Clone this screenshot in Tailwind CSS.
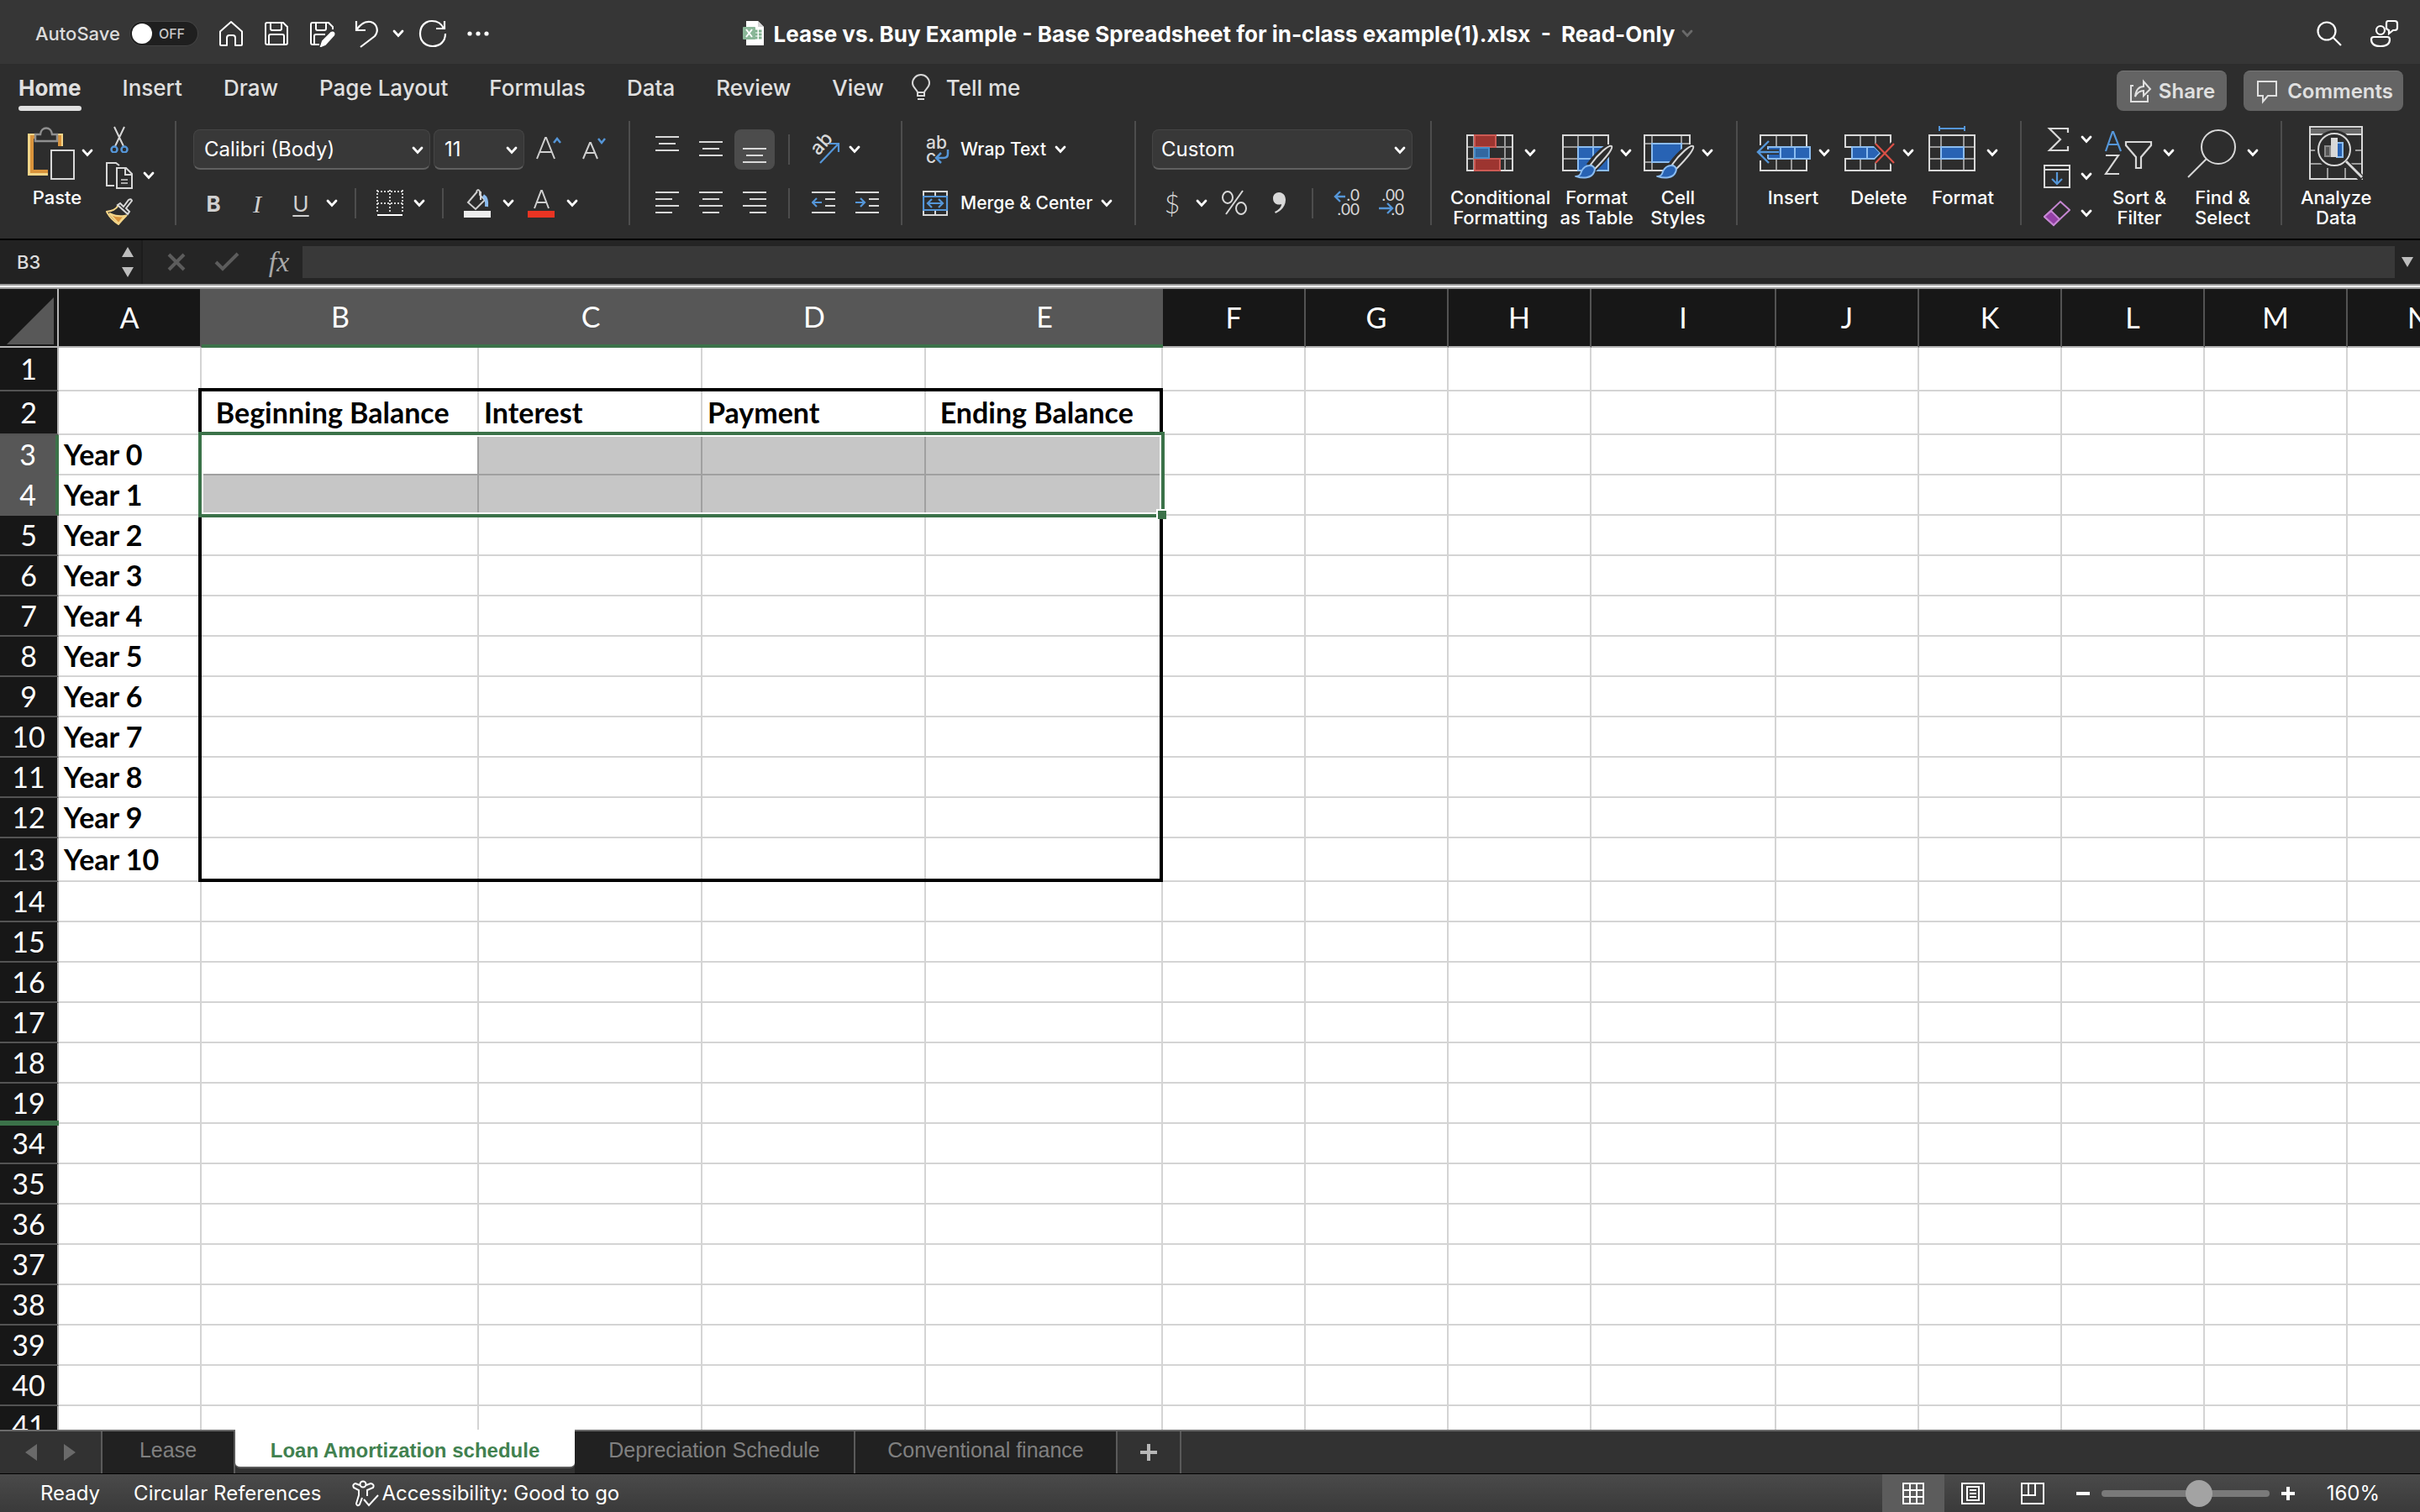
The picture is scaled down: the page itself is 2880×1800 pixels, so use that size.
<!DOCTYPE html>
<html lang="en">
<head>
<meta charset="utf-8">
<meta name="viewport" content="width=device-width, initial-scale=1">
<title>Lease vs. Buy Example</title>
<script src="https://cdn.jsdelivr.net/npm/@tailwindcss/browser@4"></script>
</head>
<body class="flex h-screen flex-col overflow-hidden bg-[#2d2d2d] font-[Inter,sans-serif] text-white">

<svg class="hidden" aria-hidden="true">
  <symbol id="chev" viewBox="0 0 14 10"><path d="M2 2l5 5.5L12 2" fill="none" stroke="currentColor" stroke-width="2.8" stroke-linecap="round"/></symbol>
  <symbol id="brush" viewBox="0 0 46 42">
    <path d="M44 2C46 5 36 17 24 29l-6-6C28 10 40 0 44 2z" fill="#2d2d2d" stroke="#2d2d2d" stroke-width="6"/>
    <path d="M44 2C46 5 36 17 24 29l-5-5C28 11 41 0 44 2z" fill="#2d2d2d" stroke="#d8d8d8" stroke-width="2"/>
    <path d="M18 25c5 0 7 4 5 8-3 7-13 8-21 5 5-1 5-3 6-6 2-4 5-7 10-7z" fill="#2863b4" stroke="#8bbcf0" stroke-width="2"/>
  </symbol>
</svg>

<!-- Title bar -->
<header class="flex h-[76px] shrink-0 items-center bg-[#363636] px-6 pt-1">
  <div class="flex flex-1 items-center pl-[18px]">
    <label for="autosave" class="text-[22px] font-medium text-[#dcdcdc]">AutoSave</label>
    <button id="autosave" role="switch" aria-checked="false" class="ml-3 flex h-7 w-20 items-center rounded-full bg-[#1f1f1f] px-0.5 ring-1 ring-[#444]">
      <span class="h-6 w-6 rounded-full bg-white"></span><span class="ml-2 text-[16px] font-medium text-[#c8c8c8]">OFF</span>
    </button>
    <button aria-label="Home" class="ml-6"><svg class="h-8 w-8" fill="none" stroke="#fff" stroke-width="2" stroke-linejoin="round"><path d="M3 13.500L16 2l13 11.500V29q0 1-1 1h-7v-9q0-3-3-3h-4q-3 0-3 3v9H4q-1 0-1-1z"/></svg></button>
    <button aria-label="Save" class="ml-[22px]"><svg class="h-8 w-8" fill="none" stroke="#fff" stroke-width="2"><path d="M5 3h19l5 5v19a2 2 0 0 1-2 2H5a2 2 0 0 1-2-2V5a2 2 0 0 1 2-2zM9 3v7q0 2 2 2h9q2 0 2-2V3M7 29V19q0-2 2-2h14q2 0 2 2v10"/></svg></button>
    <button aria-label="Save a copy" class="ml-[22px]"><svg class="h-8 w-8" fill="none" stroke="#fff" stroke-width="2"><path d="M13 29H5a2 2 0 0 1-2-2V5a2 2 0 0 1 2-2h19l5 5v3M9 3v7q0 2 2 2h8q2 0 2-2V3M7 29V19q0-2 2-2h11"/><path d="M15 31l2-6 10-10q2-1 3 0t0 3L20 29z" fill="#fff"/></svg></button>
    <button aria-label="Undo" class="ml-[22px]"><svg class="h-9 w-8" fill="none" stroke="#fff" stroke-width="2.200"><path d="M3 3v11h11M3 14C8 6 14 3 20 4c8 2 10 11 5 17L8 34"/></svg></button>
    <button aria-label="Undo options" class="ml-[14px]"><svg class="h-[10px] w-[14px]"><use href="#chev"/></svg></button>
    <button aria-label="Redo" class="ml-4"><svg class="h-9 w-9" fill="none" stroke="#fff" stroke-width="2.200"><path d="M32 3v9H22M31 12C28 5 22 3 17 3 9 3 3 9 3 18s6 15 15 15 15-6 15-15"/></svg></button>
    <button aria-label="More" class="ml-5"><svg class="h-2 w-8" fill="#fff"><circle cx="6" cy="4" r="2.600"/><circle cx="16" cy="4" r="2.600"/><circle cx="26" cy="4" r="2.600"/></svg></button>
  </div>
  <div class="flex items-center">
    <svg class="h-8 w-7"><path d="M5 1h14l7 7v22H5z" fill="#fff"/><path d="M19 1v7h7" fill="#d5d5d5"/><path d="M15 13h9M15 17h9M15 21h9" stroke="#7fb08d" stroke-width="3" stroke-dasharray="3.500 1.500"/><rect x="1" y="8" width="15" height="15" rx="1" fill="#8ab798"/><path d="M5 11l7 9M12 11l-7 9" stroke="#fff" stroke-width="2"/></svg>
    <h1 class="ml-[10px] text-[26px] font-bold whitespace-pre">Lease vs. Buy Example - Base Spreadsheet for in-class example(1).xlsx  -  Read-Only</h1>
    <button aria-label="Document options" class="ml-2 text-[#6a6a6a]"><svg class="h-[10px] w-[14px]"><use href="#chev"/></svg></button>
  </div>
  <div class="flex flex-1 justify-end gap-8">
    <button aria-label="Search"><svg class="h-8 w-8" fill="none" stroke="#fff" stroke-width="2.200"><circle cx="13" cy="13" r="10.500"/><path d="M20.500 20.500L30 30"/></svg></button>
    <button aria-label="Account"><svg class="h-9 w-9" fill="none" stroke="#fff" stroke-width="2.200"><circle cx="13" cy="14" r="5"/><path d="M5 22h16q3 0 3 3 0 8-11 8T2 25q0-3 3-3zM22 3h8q3 0 3 3v5q0 3-3 3h-2l-5 4v-4q-3-1-3-3V6q0-3 2-3z"/></svg></button>
  </div>
</header>

<!-- Ribbon tabs -->
<nav class="flex h-[68px] shrink-0 items-start bg-[#2d2d2d] pr-5 pl-[22px] text-[26px] leading-[34px] font-medium text-[#e0e0e0]">
  <div class="flex gap-[49px] pt-3">
    <a href="#" class="font-bold">Home<span class="mt-1 block h-1.5 rounded-full bg-[#e0e0e0]"></span></a>
    <a href="#">Insert</a><a href="#">Draw</a><a href="#">Page Layout</a><a href="#">Formulas</a><a href="#">Data</a><a href="#">Review</a><a href="#">View</a>
  </div>
  <a href="#" class="ml-8 flex pt-3"><svg class="h-9 w-6" fill="none" stroke="#d8d8d8" stroke-width="2"><path d="M8 26v-4C7 18 2 16 2 11a10 10 0 0 1 20 0c0 5-5 7-6 11v4zM8 22h8M8 30h8"/></svg><span class="ml-[18px]">Tell me</span></a>
  <div class="ml-auto flex gap-5 pt-2 text-2xl font-semibold">
    <button class="flex h-12 items-center gap-2 rounded-lg border-t border-[#757575] bg-[#646464] px-[14px]"><svg class="h-8 w-7" fill="none" stroke="#e0e0e0" stroke-width="2"><path d="M6 9H3v19h20v-8M8 22C9 14 13 10 18 10V4l8 9-8 8v-6c-5 0-8 3-10 7z"/></svg>Share</button>
    <button class="flex h-12 items-center gap-2 rounded-lg border-t border-[#757575] bg-[#646464] px-3"><svg class="h-8 w-8" fill="none" stroke="#e0e0e0" stroke-width="2"><path d="M5 4h22v17H17l-6 7v-7H5z"/></svg>Comments</button>
  </div>
</nav>

<!-- Ribbon -->
<section aria-label="Home ribbon" class="flex h-[142px] shrink-0 items-start border-b-2 border-black bg-[#2d2d2d] text-[22px] font-medium [&>div]:h-[124px] [&>div]:border-r-2 [&>div]:border-[#4d4d4d] [&>div:last-child]:border-0">
  <div class="flex w-[210px] pl-[34px]">
    <button class="flex w-[76px] flex-col items-center pt-[6px]">
      <span class="flex items-center gap-2"><svg class="h-16 w-14" fill="none"><path d="M12 12H3v44h22M39 26V12H30" stroke="#f4d588" stroke-width="6"/><path d="M12 13H5v41h20M38 26V13H30" stroke="#d9933b" stroke-width="4"/><path d="M9 10h6c1-10 13-10 14 0h6v8H9z" fill="#2d2d2d" stroke="#8f8f8f" stroke-width="2.500"/><path d="M24 24h32v40H24z" fill="#2d2d2d"/><rect x="28" y="29" width="27" height="34" stroke="#d8d8d8" stroke-width="2"/></svg><svg class="h-[10px] w-[14px]"><use href="#chev"/></svg></span>
      <span class="mt-[9px] mr-2 leading-6">Paste</span>
    </button>
    <div class="ml-4 flex flex-col gap-[11px] pt-[6px]">
      <button aria-label="Cut"><svg class="h-8 w-8" fill="none"><path d="M10 1l11 23M22 1L11 24" stroke="#d8d8d8" stroke-width="2"/><circle cx="10" cy="28" r="3.500" stroke="#5596d8" stroke-width="2.500"/><circle cx="22" cy="28" r="3.500" stroke="#5596d8" stroke-width="2.500"/></svg></button>
      <button aria-label="Copy" class="flex items-center gap-3"><svg class="h-8 w-8" fill="none" stroke="#d8d8d8" stroke-width="2"><path d="M10 28H1V1h11l4 3M13 7h11l7 7v17H13zM23 7v8h8"/><path d="M18 21h8M18 25h8" stroke="#a8a8a8"/></svg><svg class="h-[10px] w-[14px]"><use href="#chev"/></svg></button>
      <button aria-label="Format painter"><svg class="h-8 w-8" fill="none" stroke-width="2"><path d="M15 8C12 14 7 15 1 16c3 6 8 11 14 15 4-5 7-8 10-11" stroke="#f4d588"/><path d="M4 18c6 3 12 4 18 3l-7 9z" fill="#d9933b" stroke="#f4d588"/><path d="M14 8l3-2 4 4 6-8q3-2 4 1l-7 9 4 4-2 3z" stroke="#d8d8d8" fill="#2d2d2d"/></svg></button>
    </div>
  </div>

  <div class="flex w-[540px] flex-col gap-4 pt-[10px] pl-5">
    <div class="flex h-12 items-center text-2xl font-normal">
      <div class="relative"><select aria-label="Font" class="h-12 w-[282px] appearance-none rounded-lg border border-b-2 border-[#454545] border-b-[#606060] bg-[#383838] pl-3"><option>Calibri (Body)</option></select><svg class="pointer-events-none absolute top-5 right-2 h-[10px] w-[14px]"><use href="#chev"/></svg></div>
      <div class="relative ml-1"><select aria-label="Font size" class="h-12 w-[108px] appearance-none rounded-lg border border-b-2 border-[#454545] border-b-[#606060] bg-[#383838] pl-3"><option>11</option></select><svg class="pointer-events-none absolute top-5 right-2 h-[10px] w-[14px]"><use href="#chev"/></svg></div>
      <button aria-label="Increase font size" class="ml-[14px]"><svg class="h-8 w-8" fill="none" stroke="#d0d0d0" stroke-width="2"><path d="M1 27L11 2h1l10 25M5 19h13"/><path d="M21 8l4-5 4 5" stroke="#5596d8" stroke-width="2.500"/></svg></button>
      <button aria-label="Decrease font size" class="ml-[22px]"><svg class="h-8 w-8" fill="none" stroke="#d0d0d0" stroke-width="2"><path d="M2 27l8-19h1l8 19M5 20h11"/><path d="M20 3l4 5 4-5" stroke="#5596d8" stroke-width="2.500"/></svg></button>
    </div>
    <div class="flex h-12 items-center pl-[10px] text-[26px] text-[#d0d0d0]">
      <button class="w-7 font-bold">B</button>
      <button class="ml-6 w-7 font-[Liberation_Serif,serif] text-[30px] font-normal italic">I</button>
      <button class="ml-6 w-7 font-normal underline decoration-2 underline-offset-4">U</button>
      <button aria-label="Underline options" class="ml-4 text-white"><svg class="h-[10px] w-[14px]"><use href="#chev"/></svg></button>
      <span class="ml-5 h-9 w-0.5 bg-[#4d4d4d]"></span>
      <button aria-label="Borders" class="ml-6"><svg class="h-8 w-8" fill="none" stroke="#d0d0d0" stroke-width="2"><path d="M1 2h30M1 16h30M1 0v28M16 0v28M31 0v28" stroke-dasharray="2 2"/><path d="M1 30h30" stroke="#fff"/></svg></button>
      <button aria-label="Border options" class="ml-3 text-white"><svg class="h-[10px] w-[14px]"><use href="#chev"/></svg></button>
      <span class="ml-5 h-9 w-0.5 bg-[#4d4d4d]"></span>
      <button aria-label="Fill color" class="ml-6"><svg class="h-9 w-8" fill="none" stroke="#d0d0d0" stroke-width="2"><path d="M16 4L5 17l9 8 11-11-6-6V4q-2-4-4 0M20 4v10"/><path d="M23 9q5 3 4 13" stroke="#8bbcf0" stroke-width="4"/><rect y="27" width="32" height="8" fill="#ededed" stroke="none"/></svg></button>
      <button aria-label="Fill options" class="ml-[14px] text-white"><svg class="h-[10px] w-[14px]"><use href="#chev"/></svg></button>
      <button aria-label="Font color" class="ml-4"><svg class="h-9 w-8" fill="none" stroke="#d0d0d0" stroke-width="2"><path d="M8 24L16 3h1l8 21M11 17h11"/><rect y="27" width="32" height="8" fill="#e93423" stroke="none"/></svg></button>
      <button aria-label="Font color options" class="ml-[14px] text-white"><svg class="h-[10px] w-[14px]"><use href="#chev"/></svg></button>
    </div>
  </div>

  <div class="flex w-[324px] flex-col gap-4 pt-[10px] pl-6 text-[#d8d8d8]">
    <div class="flex h-12 items-center">
      <button aria-label="Top align" class="ml-1.5"><svg class="h-8 w-7" stroke="currentColor" stroke-width="2"><path d="M0 1h28M4 9h20M0 17h28"/></svg></button>
      <button aria-label="Middle align" class="ml-6"><svg class="h-8 w-7" stroke="currentColor" stroke-width="2"><path d="M0 7h28M4 15h20M0 23h28"/></svg></button>
      <button aria-label="Bottom align" class="ml-[14px] flex h-12 w-12 items-center justify-center rounded-lg bg-[#4c4c4c]"><svg class="h-8 w-7" stroke="currentColor" stroke-width="2"><path d="M0 15h28M4 23h20M0 31h28"/></svg></button>
      <span class="ml-4 h-9 w-0.5 bg-[#4d4d4d]"></span>
      <button aria-label="Orientation" class="ml-6"><svg class="h-9 w-9 overflow-visible"><text transform="translate(10 26) rotate(-48)" font-size="23" fill="#d8d8d8">ab</text><path d="M12 34L33 12M23 11h11v10" fill="none" stroke="#5596d8" stroke-width="2.200"/></svg></button>
      <button aria-label="Orientation options" class="ml-[10px] text-white"><svg class="h-[10px] w-[14px]"><use href="#chev"/></svg></button>
    </div>
    <div class="flex h-12 items-center">
      <button aria-label="Align left" class="ml-1.5"><svg class="h-7 w-7" stroke="currentColor" stroke-width="2"><path d="M0 1h28M0 9h20M0 17h28M0 25h20"/></svg></button>
      <button aria-label="Center" class="ml-6"><svg class="h-7 w-7" stroke="currentColor" stroke-width="2"><path d="M0 1h28M4 9h20M0 17h28M4 25h20"/></svg></button>
      <button aria-label="Align right" class="ml-6"><svg class="h-7 w-7" stroke="currentColor" stroke-width="2"><path d="M0 1h28M8 9h20M0 17h28M8 25h20"/></svg></button>
      <span class="ml-[26px] h-9 w-0.5 bg-[#4d4d4d]"></span>
      <button aria-label="Decrease indent" class="ml-[26px]"><svg class="h-7 w-7" fill="none" stroke="currentColor" stroke-width="2"><path d="M0 1h28M16 9h12M16 17h12M0 25h28"/><path d="M12 13H1M6 8l-5 5 5 5" stroke="#5596d8" stroke-width="2.200"/></svg></button>
      <button aria-label="Increase indent" class="ml-6"><svg class="h-7 w-7" fill="none" stroke="currentColor" stroke-width="2"><path d="M0 1h28M16 9h12M16 17h12M0 25h28"/><path d="M0 13h11M6 8l5 5-5 5" stroke="#5596d8" stroke-width="2.200"/></svg></button>
    </div>
  </div>

  <div class="flex w-[278px] flex-col items-start gap-4 pt-[10px] pl-6 text-[21px]">
    <button class="flex h-12 items-center"><svg class="ml-1 h-9 w-8 overflow-visible"><g font-size="21" fill="#d8d8d8"><text y="17">ab</text><text y="34">c</text></g><path d="M26 18v5q0 5-5 5h-8M18 22l-6 6 6 6" fill="none" stroke="#5596d8" stroke-width="2.500"/></svg><span class="ml-[9px]">Wrap Text</span><svg class="ml-[10px] h-[10px] w-[14px]"><use href="#chev"/></svg></button>
    <button class="flex h-12 items-center"><svg class="h-8 w-8" fill="none" stroke="#d8d8d8" stroke-width="2"><path d="M1 7V2h28v5M1 25v5h28v-5M15 2v5M15 25v5"/><path d="M1 8h28v16H1zM6 16h18M11 11l-5 5 5 5M19 11l5 5-5 5" stroke="#5596d8" stroke-width="2.200"/></svg><span class="ml-[13px]">Merge &amp; Center</span><svg class="ml-[10px] h-[10px] w-[14px]"><use href="#chev"/></svg></button>
  </div>

  <div class="flex w-[352px] flex-col gap-4 pt-[10px] pl-[19px]">
    <div class="relative w-[310px] text-2xl font-normal"><select aria-label="Number format" class="block h-12 w-full appearance-none rounded-lg border border-b-2 border-[#454545] border-b-[#606060] bg-[#383838] pl-[10px]"><option>Custom</option></select><svg class="pointer-events-none absolute top-5 right-2 h-[10px] w-[14px]"><use href="#chev"/></svg></div>
    <div class="flex h-12 items-center font-[Lato,sans-serif] font-normal text-[#d8d8d8]">
      <button class="ml-[14px] w-5 text-[32px] font-light">$</button>
      <button aria-label="Currency options" class="ml-[18px] text-white"><svg class="h-[10px] w-[14px]"><use href="#chev"/></svg></button>
      <button aria-label="Percent" class="ml-4"><svg class="h-8 w-8" fill="none" stroke="currentColor" stroke-width="2"><ellipse cx="8" cy="9" rx="6" ry="7"/><ellipse cx="24" cy="22" rx="6" ry="7"/><path d="M26 1L6 29"/></svg></button>
      <button aria-label="Comma style" class="ml-7"><svg class="h-8 w-5" fill="currentColor"><path d="M9 3c5 0 8 4 8 9 0 7-5 13-12 16l-1-2c5-2 8-6 8-9-5 2-10-1-10-7 0-4 3-7 7-7z"/></svg></button>
      <span class="ml-7 h-9 w-0.5 bg-[#4d4d4d]"></span>
      <button aria-label="Increase decimal" class="ml-6"><svg class="h-8 w-8 overflow-visible"><g font-size="19" fill="#d8d8d8" text-anchor="end"><text x="31" y="13">.0</text><text x="31" y="30">.00</text></g><path d="M14 8H2M8 2L2 8l6 6" fill="none" stroke="#5596d8" stroke-width="2.400"/></svg></button>
      <button aria-label="Decrease decimal" class="ml-[22px]"><svg class="h-8 w-8 overflow-visible"><g font-size="19" fill="#d8d8d8" text-anchor="end"><text x="30" y="13">.00</text><text x="30" y="30">.0</text></g><path d="M0 22h15M10 16l6 6-6 6" fill="none" stroke="#5596d8" stroke-width="2.400"/></svg></button>
    </div>
  </div>

  <div class="flex w-[364px] gap-[11px] pt-[6px] pl-[22px] [&>button]:flex [&>button]:flex-col [&>button]:items-center [&>button]:gap-[9px]">
    <button><span class="flex items-center gap-3"><svg class="h-16 w-[58px]" fill="none" stroke="#d8d8d8" stroke-width="2"><path d="M10 11v42M47 11v42M2 25h54M2 39h54" stroke="#9a9a9a"/><rect x="2" y="11" width="54" height="42"/><g fill="#9d3530" stroke="#cc5a54"><rect x="11" y="11" width="25" height="14"/><rect x="11" y="39" width="30" height="14"/></g><rect x="11" y="26" width="17" height="12" fill="#3267a0" stroke="#4a8cc8"/></svg><svg class="h-[10px] w-[14px]"><use href="#chev"/></svg></span><span class="leading-6">Conditional<br>Formatting</span></button>
    <button><span class="flex items-center gap-2"><svg class="h-16 w-[62px]" fill="none" stroke="#d8d8d8" stroke-width="2"><path d="M20 11v42M38 11v42M2 25h54M2 39h54" stroke="#9a9a9a"/><rect x="2" y="11" width="54" height="42"/><path d="M20 25h36v28H20z" fill="#2863b4" stroke="#8bbcf0"/><path d="M38 25v28M20 39h36" stroke="#8bbcf0"/><svg x="16" y="22" width="46" height="42" stroke="none"><use href="#brush"/></svg></svg><svg class="h-[10px] w-[14px]"><use href="#chev"/></svg></span><span class="leading-6">Format<br>as Table</span></button>
    <button><span class="flex items-center gap-2"><svg class="h-16 w-[62px]" fill="none" stroke="#d8d8d8" stroke-width="2"><path d="M11 11v42M46 11v42M2 21h54M2 43h54" stroke="#9a9a9a"/><rect x="2" y="11" width="54" height="42"/><rect x="11" y="21" width="35" height="22" fill="#2863b4" stroke="#8bbcf0"/><path d="M58 24v31H36z" fill="#2d2d2d" stroke="none"/><svg x="16" y="22" width="46" height="42" stroke="none"><use href="#brush"/></svg></svg><svg class="h-[10px] w-[14px]"><use href="#chev"/></svg></span><span class="leading-6">Cell<br>Styles</span></button>
  </div>

  <div class="flex w-[338px] gap-4 pt-[6px] pl-[22px] [&>button]:flex [&>button]:flex-col [&>button]:items-center [&>button]:gap-[9px]">
    <button><span class="flex items-center gap-2"><svg class="h-16 w-[66px]" fill="none" stroke="#d8d8d8" stroke-width="2"><path d="M24 11v42M42 11v42" stroke="#9a9a9a"/><rect x="5" y="11" width="55" height="42"/><path d="M2 23h10v18H2z" fill="#2d2d2d" stroke="none"/><path d="M14 25h50v14H14z" fill="#2863b4" stroke="#8bbcf0"/><path d="M29 25v14M46 25v14" stroke="#8bbcf0"/><path d="M27 31H1M14 18L2 31l12 13" stroke="#2d2d2d" stroke-width="6"/><path d="M27 31H2M15 18L2 31l13 13" stroke="#5596d8" stroke-width="2.400"/></svg><svg class="h-[10px] w-[14px]"><use href="#chev"/></svg></span><span class="leading-6">Insert</span></button>
    <button><span class="flex items-center gap-2"><svg class="h-16 w-[62px]" fill="none" stroke="#d8d8d8" stroke-width="2"><path d="M20 11v14M38 11v14M20 39v14M38 39v14" stroke="#9a9a9a"/><path d="M10 25H2V11h54v12M10 39H2v14h54V41"/><path d="M10 25h27l7 7-7 7H10z" fill="#2863b4" stroke="#8bbcf0"/><path d="M28 25v14" stroke="#8bbcf0"/><path d="M38 21l22 23M60 21L38 44" stroke="#2d2d2d" stroke-width="7"/><path d="M38 21l22 23M60 21L38 44" stroke="#dc5046" stroke-width="2.200"/></svg><svg class="h-[10px] w-[14px]"><use href="#chev"/></svg></span><span class="leading-6">Delete</span></button>
    <button><span class="flex items-center gap-3"><svg class="h-16 w-[58px]" fill="none" stroke="#d8d8d8" stroke-width="2"><path d="M16 11v42M43 11v42M2 25h54M2 39h54" stroke="#9a9a9a"/><rect x="2" y="11" width="54" height="42"/><rect x="16" y="25" width="27" height="14" fill="#2863b4" stroke="#8bbcf0"/><path d="M14 0v6M44 0v6M14 3h30" stroke="#5596d8"/></svg><svg class="h-[10px] w-[14px]"><use href="#chev"/></svg></span><span class="leading-6">Format</span></button>
  </div>

  <div class="flex w-[310px] gap-[14px] pt-[6px] pl-[26px] [&>button]:flex [&>button]:flex-col [&>button]:items-center [&>button]:gap-[9px]">
    <div class="flex flex-col gap-3">
      <button aria-label="AutoSum" class="flex items-center gap-3"><svg class="h-8 w-8" fill="none" stroke="#d8d8d8" stroke-width="2.200"><path d="M29 8V3H7l13 13L7 29h22v-5"/></svg><svg class="h-[10px] w-[14px]"><use href="#chev"/></svg></button>
      <button aria-label="Fill" class="flex items-center gap-3"><svg class="h-8 w-8" fill="none" stroke="#d8d8d8" stroke-width="2"><path d="M1 3h30v26H1zM1 8h30"/><path d="M16 11v14M10 19l6 6 6-6" stroke="#5596d8" stroke-width="2.200"/></svg><svg class="h-[10px] w-[14px]"><use href="#chev"/></svg></button>
      <button aria-label="Clear" class="flex items-center gap-3"><svg class="h-8 w-8" fill="none" stroke="#c586d2" stroke-width="2"><path d="M20 2l11 10-19 18L1 20z"/><path d="M9 13L1 20l11 10 7-7z" fill="#9340a5"/></svg><svg class="h-[10px] w-[14px]"><use href="#chev"/></svg></button>
    </div>
    <button><span class="flex items-center gap-3"><svg class="h-16 w-[58px]" fill="none" stroke="#d8d8d8" stroke-width="2.200"><path d="M2 30l8-23h1l9 23M5 22h12" stroke="#5596d8"/><path d="M2 35h15L2 57h16M26 19h30v4L44 37v13h-6V37L26 23z"/></svg><svg class="h-[10px] w-[14px]"><use href="#chev"/></svg></span><span class="leading-6">Sort &amp;<br>Filter</span></button>
    <button><span class="flex items-center gap-3"><svg class="h-16 w-[60px]" fill="none" stroke="#d8d8d8" stroke-width="2"><circle cx="38" cy="25" r="20"/><path d="M24 39L2 61"/></svg><svg class="h-[10px] w-[14px]"><use href="#chev"/></svg></span><span class="leading-6">Find &amp;<br>Select</span></button>
  </div>

  <div class="pt-[6px] pl-[22px]">
    <button class="flex flex-col items-center gap-[9px]"><svg class="h-16 w-16" fill="none" stroke="#d8d8d8" stroke-width="2"><path d="M1 3h62v8H1z" fill="#6a6a6a" stroke="none"/><path d="M1 29h8M55 29h8M1 45h62M22 50v12M43 50v12" stroke="#9a9a9a"/><path d="M1 1h62v62H1zM1 10h62"/><circle cx="30" cy="28" r="22" fill="#2d2d2d" stroke="#2d2d2d"/><circle cx="30" cy="28" r="19" fill="#2d2d2d"/><path d="M19 24h6v12h-6z" fill="#555" stroke="#8a8a8a"/><path d="M33 20h7v17h-7z" fill="#2863b4" stroke="#8bbcf0"/><path d="M26 14h8v23h-8z" fill="#d8d8d8" stroke="none"/><path d="M43 43l20 20" stroke="#2d2d2d" stroke-width="8"/><path d="M44 42l19 19" stroke-width="3"/></svg><span class="leading-6">Analyze<br>Data</span></button>
  </div>
</section>

<!-- Formula bar -->
<div class="flex h-[52px] shrink-0 items-center bg-[#252525] pr-2">
  <div class="flex h-full w-[170px] items-center border-r-2 border-[#1c1c1c] bg-[#222] pr-2 pl-5">
    <input aria-label="Name box" value="B3" class="w-0 flex-1 bg-transparent text-[22px] font-medium text-[#dcdcdc]">
    <svg class="h-9 w-4" fill="#bdbdbd"><path d="M1 12L8 0l7 12zM1 24h14L8 36z"/></svg>
  </div>
  <button aria-label="Cancel" class="ml-7"><svg class="h-6 w-6" stroke="#5c5c5c" stroke-width="4"><path d="M3 3l18 18M21 3L3 21"/></svg></button>
  <button aria-label="Enter" class="ml-8"><svg class="h-6 w-8" fill="none" stroke="#5c5c5c" stroke-width="4"><path d="M3 12l8 8L29 2"/></svg></button>
  <button aria-label="Insert function" class="ml-7 w-9 font-[Liberation_Serif,serif] text-[34px] leading-none text-[#a8a8a8] italic">fx</button>
  <input aria-label="Formula" class="ml-[10px] h-[38px] flex-1 bg-[#393939]">
  <button aria-label="Expand formula bar" class="ml-2"><svg class="h-3 w-[14px]" fill="#bdbdbd"><path d="M0 0h14L7 12z"/></svg></button>
</div>
<div class="h-1.5 shrink-0 border-y-2 border-[#9c9c9c] bg-white"></div>

<!-- Sheet -->
<main class="relative min-h-0 flex-1 overflow-hidden bg-white font-[Lato,sans-serif] text-[34px] leading-[40px] text-black">
  <table class="w-[2964px] table-fixed border-separate border-spacing-0 [&_tbody_th]:overflow-visible [&_tbody_th]:border-r-2 [&_tbody_th]:border-b-2 [&_tbody_th]:border-r-[#b5b5b5] [&_tbody_th]:border-b-[#535353] [&_tbody_th]:bg-[#171717] [&_tbody_th]:p-0 [&_tbody_th]:font-normal [&_tbody_th]:text-white [&_td]:border-r-2 [&_td]:border-b-2 [&_td]:border-[#d4d4d4] [&_td]:px-1.5 [&_td]:py-0 [&_td]:font-bold [&_td]:whitespace-nowrap">
    <colgroup><col class="w-[70px]"><col class="w-[170px]"><col class="w-[330px]"><col class="w-[266px]"><col class="w-[266px]"><col class="w-[282px]"><col class="w-[170px]"><col class="w-[170px]"><col class="w-[170px]"><col class="w-[220px]"><col class="w-[170px]"><col class="w-[170px]"><col class="w-[170px]"><col class="w-[170px]"><col class="w-[170px]"></colgroup>
    <thead>
      <tr class="h-[70px] bg-[#171717] text-white [&>th]:border-r-2 [&>th]:border-b-2 [&>th]:border-r-[#535353] [&>th]:border-b-[#b5b5b5] [&>th]:p-0 [&>th]:font-normal">
        <th class="border-r-[#b5b5b5]!"><button aria-label="Select all" class="block h-[68px] w-[68px] pt-2 pl-2"><svg class="h-14 w-14" fill="#585858"><path d="M56 0v56H0z"/></svg></button></th>
        <th class="border-r-[#575757]!">A</th>
        <th class="border-r-0! border-b-4! border-b-[#3b7249]! bg-[#575757]">B</th><th class="border-r-0! border-b-4! border-b-[#3b7249]! bg-[#575757]">C</th><th class="border-r-0! border-b-4! border-b-[#3b7249]! bg-[#575757]">D</th><th class="border-r-0! border-b-4! border-b-[#3b7249]! bg-[#575757]">E</th>
        <th>F</th><th>G</th><th>H</th><th>I</th><th>J</th><th>K</th><th>L</th><th>M</th><th>N</th>
      </tr>
    </thead>
    <tbody>
      <tr class="h-[52px]"><th>1</th><td></td><td></td><td></td><td></td><td></td><td></td><td></td><td></td><td></td><td></td><td></td><td></td><td></td><td></td></tr>
      <tr class="h-[52px]"><th>2</th><td></td><td class="text-center">Beginning Balance&nbsp;&nbsp;</td><td>Interest</td><td>Payment</td><td class="text-center">Ending Balance&nbsp;&nbsp;</td><td></td><td></td><td></td><td></td><td></td><td></td><td></td><td></td><td></td></tr>
      <tr class="h-12"><th class="border-r-4! border-r-[#3b7249]! border-b-[#575757]! bg-[#575757]!">3</th><td>Year 0</td><td class="border-[#a0a0a0]!"></td><td class="border-[#a0a0a0]! bg-[#c6c6c6]"></td><td class="border-[#a0a0a0]! bg-[#c6c6c6]"></td><td class="border-[#a0a0a0]! bg-[#c6c6c6]"></td><td></td><td></td><td></td><td></td><td></td><td></td><td></td><td></td><td></td></tr>
      <tr class="h-12"><th class="border-r-4! border-r-[#3b7249]! border-b-[#575757]! bg-[#575757]!">4</th><td>Year 1</td><td class="border-r-[#a0a0a0]! bg-[#c6c6c6]"></td><td class="border-r-[#a0a0a0]! bg-[#c6c6c6]"></td><td class="border-r-[#a0a0a0]! bg-[#c6c6c6]"></td><td class="border-r-[#a0a0a0]! bg-[#c6c6c6]"></td><td></td><td></td><td></td><td></td><td></td><td></td><td></td><td></td><td></td></tr>
      <tr class="h-12"><th>5</th><td>Year 2</td><td></td><td></td><td></td><td></td><td></td><td></td><td></td><td></td><td></td><td></td><td></td><td></td><td></td></tr>
      <tr class="h-12"><th>6</th><td>Year 3</td><td></td><td></td><td></td><td></td><td></td><td></td><td></td><td></td><td></td><td></td><td></td><td></td><td></td></tr>
      <tr class="h-12"><th>7</th><td>Year 4</td><td></td><td></td><td></td><td></td><td></td><td></td><td></td><td></td><td></td><td></td><td></td><td></td><td></td></tr>
      <tr class="h-12"><th>8</th><td>Year 5</td><td></td><td></td><td></td><td></td><td></td><td></td><td></td><td></td><td></td><td></td><td></td><td></td><td></td></tr>
      <tr class="h-12"><th>9</th><td>Year 6</td><td></td><td></td><td></td><td></td><td></td><td></td><td></td><td></td><td></td><td></td><td></td><td></td><td></td></tr>
      <tr class="h-12"><th>10</th><td>Year 7</td><td></td><td></td><td></td><td></td><td></td><td></td><td></td><td></td><td></td><td></td><td></td><td></td><td></td></tr>
      <tr class="h-12"><th>11</th><td>Year 8</td><td></td><td></td><td></td><td></td><td></td><td></td><td></td><td></td><td></td><td></td><td></td><td></td><td></td></tr>
      <tr class="h-12"><th>12</th><td>Year 9</td><td></td><td></td><td></td><td></td><td></td><td></td><td></td><td></td><td></td><td></td><td></td><td></td><td></td></tr>
      <tr class="h-[52px]"><th>13</th><td>Year 10</td><td></td><td></td><td></td><td></td><td></td><td></td><td></td><td></td><td></td><td></td><td></td><td></td><td></td></tr>
      <tr class="h-12"><th>14</th><td></td><td></td><td></td><td></td><td></td><td></td><td></td><td></td><td></td><td></td><td></td><td></td><td></td><td></td></tr>
      <tr class="h-12"><th>15</th><td></td><td></td><td></td><td></td><td></td><td></td><td></td><td></td><td></td><td></td><td></td><td></td><td></td><td></td></tr>
      <tr class="h-12"><th>16</th><td></td><td></td><td></td><td></td><td></td><td></td><td></td><td></td><td></td><td></td><td></td><td></td><td></td><td></td></tr>
      <tr class="h-12"><th>17</th><td></td><td></td><td></td><td></td><td></td><td></td><td></td><td></td><td></td><td></td><td></td><td></td><td></td><td></td></tr>
      <tr class="h-12"><th>18</th><td></td><td></td><td></td><td></td><td></td><td></td><td></td><td></td><td></td><td></td><td></td><td></td><td></td><td></td></tr>
      <tr class="h-12"><th class="relative">19<span class="absolute top-11 left-0 z-10 h-1.5 w-[70px] bg-[#3b7249]"></span></th><td></td><td></td><td></td><td></td><td></td><td></td><td></td><td></td><td></td><td></td><td></td><td></td><td></td><td></td></tr>
      <tr class="h-12"><th>34</th><td></td><td></td><td></td><td></td><td></td><td></td><td></td><td></td><td></td><td></td><td></td><td></td><td></td><td></td></tr>
      <tr class="h-12"><th>35</th><td></td><td></td><td></td><td></td><td></td><td></td><td></td><td></td><td></td><td></td><td></td><td></td><td></td><td></td></tr>
      <tr class="h-12"><th>36</th><td></td><td></td><td></td><td></td><td></td><td></td><td></td><td></td><td></td><td></td><td></td><td></td><td></td><td></td></tr>
      <tr class="h-12"><th>37</th><td></td><td></td><td></td><td></td><td></td><td></td><td></td><td></td><td></td><td></td><td></td><td></td><td></td><td></td></tr>
      <tr class="h-12"><th>38</th><td></td><td></td><td></td><td></td><td></td><td></td><td></td><td></td><td></td><td></td><td></td><td></td><td></td><td></td></tr>
      <tr class="h-12"><th>39</th><td></td><td></td><td></td><td></td><td></td><td></td><td></td><td></td><td></td><td></td><td></td><td></td><td></td><td></td></tr>
      <tr class="h-12"><th>40</th><td></td><td></td><td></td><td></td><td></td><td></td><td></td><td></td><td></td><td></td><td></td><td></td><td></td><td></td></tr>
      <tr class="h-12"><th>41</th><td></td><td></td><td></td><td></td><td></td><td></td><td></td><td></td><td></td><td></td><td></td><td></td><td></td><td></td></tr>
    </tbody>
  </table>
  <!-- Outline of B2:E13, then the selection B3:E4 with its fill handle -->
  <div class="pointer-events-none absolute top-[118px] left-[236px] h-[588px] w-[1148px] border-4 border-black"></div>
  <div class="pointer-events-none absolute top-[170px] left-[236px] h-[102px] w-[1150px] border-4 border-[#3b7249]">
    <div class="h-full border-2 border-white"></div>
    <div class="absolute -right-1.5 -bottom-1.5 h-3 w-3 border-t-2 border-l-2 border-white bg-[#3b7249]"></div>
  </div>
</main>

<!-- Sheet tabs -->
<nav aria-label="Sheets" class="flex h-[52px] shrink-0 border-t-2 border-[#6a6a6a] bg-[#323232] font-[Liberation_Sans,sans-serif] text-[25px] text-[#808080]">
  <div class="flex w-[122px] items-center gap-8 border-r-2 border-[#5a5a5a] pl-[30px]">
    <button aria-label="Previous sheet"><svg class="h-5 w-[14px]" fill="#6a6a6a"><path d="M14 0v20L0 10z"/></svg></button>
    <button aria-label="Next sheet"><svg class="h-5 w-[14px]" fill="#6a6a6a"><path d="M0 0v20l14-10z"/></svg></button>
  </div>
  <a href="#" class="flex w-[158px] items-center justify-center border-r-2 border-[#5a5a5a] bg-[#212121] pb-1">Lease</a>
  <a href="#" aria-current="page" class="-mt-0.5 flex h-[46px] w-[404px] items-center justify-center rounded-b-md border-b-2 border-[#5a5a5a] bg-white pt-1.5 text-2xl font-bold text-[#41814f]">Loan Amortization schedule</a>
  <a href="#" class="flex w-[334px] items-center justify-center border-r-2 border-[#5a5a5a] bg-[#212121] pb-1">Depreciation Schedule</a>
  <a href="#" class="flex w-[312px] items-center justify-center border-r-2 border-[#5a5a5a] bg-[#212121] pb-1">Conventional finance</a>
  <button aria-label="Add sheet" class="flex w-[76px] items-center justify-center border-r-2 border-[#5a5a5a]"><svg class="h-5 w-5" stroke="#b8b8b8" stroke-width="4"><path d="M10 0v20M0 10h20"/></svg></button>
</nav>

<!-- Status bar -->
<footer class="flex h-[46px] shrink-0 items-center border-t border-black bg-linear-to-b from-[#4a4a4a] to-[#3a3a3a] pr-12 pl-12 text-2xl">
  <span>Ready</span>
  <span class="ml-10">Circular References</span>
  <button class="ml-9 flex items-center gap-1"><svg class="h-8 w-8" fill="none" stroke="#fff" stroke-width="2"><circle cx="13" cy="5" r="3.500"/><path d="M9 6L4 4Q0 5 2 9l6 3v6L5 28q1 4 4 1l3-8M17 6l5-2q5 1 3 5l-7 3v7M14 23l6 7L31 18"/></svg>Accessibility: Good to go</button>
  <div class="ml-auto flex h-full items-center">
    <button aria-label="Normal view" class="flex h-full w-[74px] items-center justify-center bg-[#5c5c5c]"><svg class="h-7 w-7" fill="none" stroke="#fff" stroke-width="2"><path d="M2 2h24v24H2zM10 2v24M18 2v24M2 10h24M2 18h24"/></svg></button>
    <button aria-label="Page layout view" class="ml-5"><svg class="h-7 w-7" fill="none" stroke="#fff" stroke-width="2"><path d="M1 2h26v24H1zM7 6h14v16H7zM10 10h8M10 14h8M10 18h8"/></svg></button>
    <button aria-label="Page break view" class="ml-[43px]"><svg class="h-7 w-7" fill="none" stroke="#fff" stroke-width="2"><path d="M1 2h26v24H1zM9 2v14M17 2v14H1"/></svg></button>
    <button aria-label="Zoom out" class="ml-[38px]"><svg class="h-4 w-4" stroke="#fff" stroke-width="4"><path d="M0 8h16"/></svg></button>
    <input type="range" aria-label="Zoom" min="0" max="100" value="60" class="mx-[14px] h-8 w-[200px] appearance-none bg-transparent [&::-webkit-slider-runnable-track]:h-2 [&::-webkit-slider-runnable-track]:rounded-full [&::-webkit-slider-runnable-track]:bg-[#7a7a7a] [&::-webkit-slider-thumb]:-mt-3 [&::-webkit-slider-thumb]:h-8 [&::-webkit-slider-thumb]:w-8 [&::-webkit-slider-thumb]:appearance-none [&::-webkit-slider-thumb]:rounded-full [&::-webkit-slider-thumb]:bg-[#a3a3a3]">
    <button aria-label="Zoom in"><svg class="h-4 w-4" stroke="#fff" stroke-width="4"><path d="M0 8h16M8 0v16"/></svg></button>
    <span class="ml-[38px]">160%</span>
  </div>
</footer>
</body>
</html>
